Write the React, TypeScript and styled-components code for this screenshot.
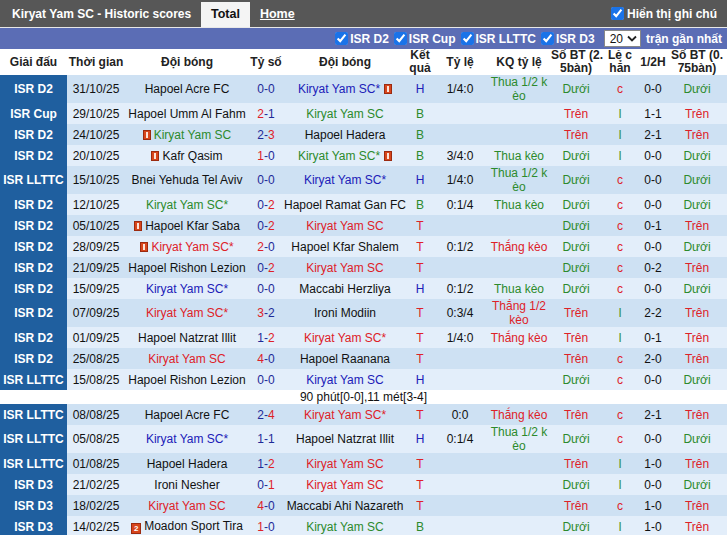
import styled, { createGlobalStyle } from "styled-components";

type Res = "T" | "H" | "B";
type Card = "one" | "two";

interface Match {
  league: string;
  date: string;
  home: string;
  away: string;
  score: [number, number];
  res: Res;
  kyHome: boolean;
  homeCard?: Card;
  awayCard?: Card;
  line?: string;
  lineRes?: string;
  ou: string;
  oe: string;
  half: string;
  ou2: string;
}

const KY = "Kiryat Yam SC";

const matches: Match[] = [
  { league: "ISR D2", date: "31/10/25", home: "Hapoel Acre FC", away: KY + "*", awayCard: "one", score: [0, 0], res: "H", kyHome: false, line: "1/4:0", lineRes: "Thua 1/2 k\nèo", ou: "Dưới", oe: "c", half: "0-0", ou2: "Dưới" },
  { league: "ISR Cup", date: "29/10/25", home: "Hapoel Umm Al Fahm", away: KY, score: [2, 1], res: "B", kyHome: false, ou: "Trên", oe: "l", half: "1-1", ou2: "Trên" },
  { league: "ISR D2", date: "24/10/25", home: KY, homeCard: "one", away: "Hapoel Hadera", score: [2, 3], res: "B", kyHome: true, ou: "Trên", oe: "l", half: "2-1", ou2: "Trên" },
  { league: "ISR D2", date: "20/10/25", home: "Kafr Qasim", homeCard: "one", away: KY + "*", awayCard: "one", score: [1, 0], res: "B", kyHome: false, line: "3/4:0", lineRes: "Thua kèo", ou: "Dưới", oe: "l", half: "0-0", ou2: "Dưới" },
  { league: "ISR LLTTC", date: "15/10/25", home: "Bnei Yehuda Tel Aviv", away: KY + "*", score: [0, 0], res: "H", kyHome: false, line: "1/4:0", lineRes: "Thua 1/2 k\nèo", ou: "Dưới", oe: "c", half: "0-0", ou2: "Dưới" },
  { league: "ISR D2", date: "12/10/25", home: KY + "*", away: "Hapoel Ramat Gan FC", score: [0, 2], res: "B", kyHome: true, line: "0:1/4", lineRes: "Thua kèo", ou: "Dưới", oe: "c", half: "0-0", ou2: "Dưới" },
  { league: "ISR D2", date: "05/10/25", home: "Hapoel Kfar Saba", homeCard: "one", away: KY, score: [0, 2], res: "T", kyHome: false, ou: "Dưới", oe: "c", half: "0-1", ou2: "Trên" },
  { league: "ISR D2", date: "28/09/25", home: KY + "*", homeCard: "one", away: "Hapoel Kfar Shalem", score: [2, 0], res: "T", kyHome: true, line: "0:1/2", lineRes: "Thắng kèo", ou: "Dưới", oe: "c", half: "0-0", ou2: "Dưới" },
  { league: "ISR D2", date: "21/09/25", home: "Hapoel Rishon Lezion", away: KY, score: [0, 2], res: "T", kyHome: false, ou: "Dưới", oe: "c", half: "0-2", ou2: "Trên" },
  { league: "ISR D2", date: "15/09/25", home: KY + "*", away: "Maccabi Herzliya", score: [0, 0], res: "H", kyHome: true, line: "0:1/2", lineRes: "Thua kèo", ou: "Dưới", oe: "c", half: "0-0", ou2: "Dưới" },
  { league: "ISR D2", date: "07/09/25", home: KY + "*", away: "Ironi Modiin", score: [3, 2], res: "T", kyHome: true, line: "0:3/4", lineRes: "Thắng 1/2\nkèo", ou: "Trên", oe: "l", half: "2-2", ou2: "Trên" },
  { league: "ISR D2", date: "01/09/25", home: "Hapoel Natzrat Illit", away: KY + "*", score: [1, 2], res: "T", kyHome: false, line: "1/4:0", lineRes: "Thắng kèo", ou: "Trên", oe: "l", half: "0-1", ou2: "Trên" },
  { league: "ISR D2", date: "25/08/25", home: KY, away: "Hapoel Raanana", score: [4, 0], res: "T", kyHome: true, ou: "Trên", oe: "c", half: "2-0", ou2: "Trên" },
  { league: "ISR LLTTC", date: "15/08/25", home: "Hapoel Rishon Lezion", away: KY, score: [0, 0], res: "H", kyHome: false, ou: "Dưới", oe: "c", half: "0-0", ou2: "Dưới" },
  { league: "ISR LLTTC", date: "08/08/25", home: "Hapoel Acre FC", away: KY + "*", score: [2, 4], res: "T", kyHome: false, line: "0:0", lineRes: "Thắng kèo", ou: "Trên", oe: "c", half: "2-1", ou2: "Trên" },
  { league: "ISR LLTTC", date: "05/08/25", home: KY + "*", away: "Hapoel Natzrat Illit", score: [1, 1], res: "H", kyHome: true, line: "0:1/4", lineRes: "Thua 1/2 k\nèo", ou: "Dưới", oe: "c", half: "0-0", ou2: "Dưới" },
  { league: "ISR LLTTC", date: "01/08/25", home: "Hapoel Hadera", away: KY, score: [1, 2], res: "T", kyHome: false, ou: "Trên", oe: "l", half: "1-0", ou2: "Trên" },
  { league: "ISR D3", date: "21/02/25", home: "Ironi Nesher", away: KY, score: [0, 1], res: "T", kyHome: false, ou: "Dưới", oe: "l", half: "0-0", ou2: "Dưới" },
  { league: "ISR D3", date: "18/02/25", home: KY, away: "Maccabi Ahi Nazareth", score: [4, 0], res: "T", kyHome: true, ou: "Trên", oe: "c", half: "1-0", ou2: "Trên" },
  { league: "ISR D3", date: "14/02/25", home: "Moadon Sport Tira", homeCard: "two", away: KY, score: [1, 0], res: "B", kyHome: false, ou: "Dưới", oe: "l", half: "1-0", ou2: "Trên" },
];

const RED = "#de2128";
const GREEN = "#2c8a2c";
const BLUE = "#2020b8";
const SCORE_BLUE = "#1e2a98";

const resColor = (r: Res) => (r === "T" ? RED : r === "H" ? BLUE : GREEN);

const colWidths = [67, 58, 124, 34, 124, 26, 54, 64, 50, 38, 28, 60];

const GlobalStyle = createGlobalStyle`
  body {
    margin: 0;
    background: #fff;
    font-family: "Liberation Sans", Arial, sans-serif;
  }
`;

const Wrap = styled.div`
  width: 727px;
  overflow: hidden;
`;

const TopBar = styled.div`
  display: flex;
  align-items: flex-end;
  height: 27px;
  background: #575757;
  color: #fff;
  font-size: 12px;
  font-weight: bold;
`;

const Title = styled.div`
  align-self: center;
  padding-left: 12px;
  width: 189px;
  font-size: 12px;
`;

const Tab = styled.div<{ $active?: boolean }>`
  height: 25px;
  line-height: 25px;
  padding: 0 10px;
  background: ${(p) => (p.$active ? "#f4f4f4" : "transparent")};
  color: ${(p) => (p.$active ? "#111" : "#fff")};
  text-decoration: ${(p) => (p.$active ? "none" : "underline")};
  font-size: 12.5px;
`;

const Note = styled.label`
  display: flex;
  align-items: center;
  gap: 1px;
  align-self: center;
  margin-left: auto;
  padding-right: 10px;
  font-size: 12px;
`;

const Box = styled.input.attrs({ type: "checkbox", defaultChecked: true, readOnly: true })`
  width: 13px;
  height: 13px;
  margin: 0 2px 0 0;
  accent-color: #1a73e8;
`;

const FilterBar = styled.div`
  display: flex;
  justify-content: flex-end;
  align-items: center;
  gap: 5px;
  height: 21px;
  padding-right: 5px;
  border-top: 1px solid #e8e8e8;
  background: #5b6db5;
  color: #fff;
  font-size: 12px;
  font-weight: bold;
`;

const Filter = styled.label`
  display: flex;
  align-items: center;
`;

const Select = styled.div`
  display: flex;
  align-items: center;
  gap: 4px;
  height: 15px;
  padding: 0 3px 0 5px;
  margin-left: 4px;
  background: #fff;
  border: 1px solid #888;
  color: #111;
  font-weight: normal;
  font-size: 12px;
`;

const Table = styled.table`
  width: 727px;
  border-collapse: collapse;
  table-layout: fixed;
  font-size: 12px;
  line-height: 14px;
`;

const Th = styled.th`
  height: 26px;
  padding: 0;
  line-height: 13px;
  font-weight: bold;
  color: #222;
  text-align: center;
  white-space: pre;
  background: #fff;
`;

const Row = styled.tr<{ $odd: boolean }>`
  background: ${(p) => (p.$odd ? "#cee1f3" : "#e3eefa")};
`;

const Td = styled.td<{ $color?: string }>`
  height: 21px;
  padding: 0;
  text-align: center;
  white-space: pre;
  color: ${(p) => p.$color ?? "#111"};
  overflow: hidden;
`;

const League = styled.td`
  height: 21px;
  padding: 0;
  text-align: center;
  background: #1f5f9f;
  color: #fff;
  font-weight: bold;
  font-size: 12px;
  white-space: nowrap;
`;

const CardIcon = styled.span<{ $after?: boolean }>`
  display: inline-block;
  position: relative;
  width: 6px;
  height: 8px;
  margin: ${(p) => (p.$after ? "0 0 0 4px" : "0 3px 0 0")};
  vertical-align: -1px;
  background: #d8461c;
  border: 1px solid #9b2a10;
  &::after {
    content: "";
    position: absolute;
    left: 2px;
    top: 1px;
    width: 2px;
    height: 6px;
    background: #fbe3d8;
  }
`;

const DoubleCard = styled.span`
  display: inline-block;
  width: 8px;
  height: 9px;
  margin-right: 3px;
  vertical-align: -1px;
  background: #d8461c;
  border: 1px solid #9b2a10;
  color: #fff;
  font-size: 8px;
  line-height: 9px;
  font-weight: bold;
  text-align: center;
`;

const Goal = styled.span<{ $win: boolean }>`
  color: ${(p) => (p.$win ? RED : SCORE_BLUE)};
`;

const FootRow = styled.tr`
  background: #fff;
`;

const FootCell = styled.td`
  height: 14px;
  padding: 0;
  text-align: center;
  color: #111;
`;

const Card = ({ kind, after }: { kind?: Card; after?: boolean }) => {
  if (!kind) return null;
  if (kind === "two") return <DoubleCard>2</DoubleCard>;
  return <CardIcon $after={after} />;
};

const Team = ({ name, color, card, after }: { name: string; color: string; card?: Card; after?: boolean }) => (
  <Td $color={color}>
    {!after && <Card kind={card} />}
    {name}
    {after && <Card kind={card} after />}
  </Td>
);

const Score = ({ score }: { score: [number, number] }) => {
  const [h, a] = score;
  return (
    <Td>
      <Goal $win={h > a}>{h}</Goal>
      <Goal $win={false}>-</Goal>
      <Goal $win={a > h}>{a}</Goal>
    </Td>
  );
};

const ouColor = (v: string) => (v === "Trên" ? RED : GREEN);

const MatchRow = ({ m, odd }: { m: Match; odd: boolean }) => {
  const kc = resColor(m.res);
  return (
    <Row $odd={odd}>
      <League>{m.league}</League>
      <Td>{m.date}</Td>
      <Team name={m.home} color={m.kyHome ? kc : "#111"} card={m.homeCard} />
      <Score score={m.score} />
      <Team name={m.away} color={m.kyHome ? "#111" : kc} card={m.awayCard} after />
      <Td $color={kc}>{m.res}</Td>
      <Td>{m.line ?? ""}</Td>
      <Td $color={m.lineRes?.startsWith("Thua") ? GREEN : RED}>{m.lineRes ?? ""}</Td>
      <Td $color={ouColor(m.ou)}>{m.ou}</Td>
      <Td $color={m.oe === "c" ? RED : GREEN}>{m.oe}</Td>
      <Td>{m.half}</Td>
      <Td $color={ouColor(m.ou2)}>{m.ou2}</Td>
    </Row>
  );
};

const headers = [
  "Giải đấu",
  "Thời gian",
  "Đội bóng",
  "Tỷ số",
  "Đội bóng",
  "Kết\nquả",
  "Tỷ lệ",
  "KQ tỷ lệ",
  "Số BT (2.\n5bàn)",
  "Lẻ c\nhẳn",
  "1/2H",
  "Số BT (0.\n75bàn)",
];

export default function App() {
  const first = matches.slice(0, 14);
  const rest = matches.slice(14);
  return (
    <Wrap>
      <GlobalStyle />
      <TopBar>
        <Title>Kiryat Yam SC - Historic scores</Title>
        <Tab $active>Total</Tab>
        <Tab>Home</Tab>
        <Note>
          <Box />
          Hiển thị ghi chú
        </Note>
      </TopBar>
      <FilterBar>
        {["ISR D2", "ISR Cup", "ISR LLTTC", "ISR D3"].map((f) => (
          <Filter key={f}>
            <Box />
            {f}
          </Filter>
        ))}
        <Select>
          20
          <svg width="10" height="7" viewBox="0 0 10 7">
            <path d="M1 1.5 L5 5.5 L9 1.5" fill="none" stroke="#222" strokeWidth="1.8" />
          </svg>
        </Select>
        <span>trận gần nhất</span>
      </FilterBar>
      <Table>
        <colgroup>
          {colWidths.map((w, i) => (
            <col key={i} style={{ width: w }} />
          ))}
        </colgroup>
        <thead>
          <tr>
            {headers.map((h, i) => (
              <Th key={i}>{h}</Th>
            ))}
          </tr>
        </thead>
        <tbody>
          {first.map((m, i) => (
            <MatchRow key={m.date} m={m} odd={i % 2 === 0} />
          ))}
          <FootRow>
            <FootCell colSpan={12}>90 phút[0-0],11 mét[3-4]</FootCell>
          </FootRow>
          {rest.map((m, i) => (
            <MatchRow key={m.date} m={m} odd={i % 2 === 0} />
          ))}
        </tbody>
      </Table>
    </Wrap>
  );
}
